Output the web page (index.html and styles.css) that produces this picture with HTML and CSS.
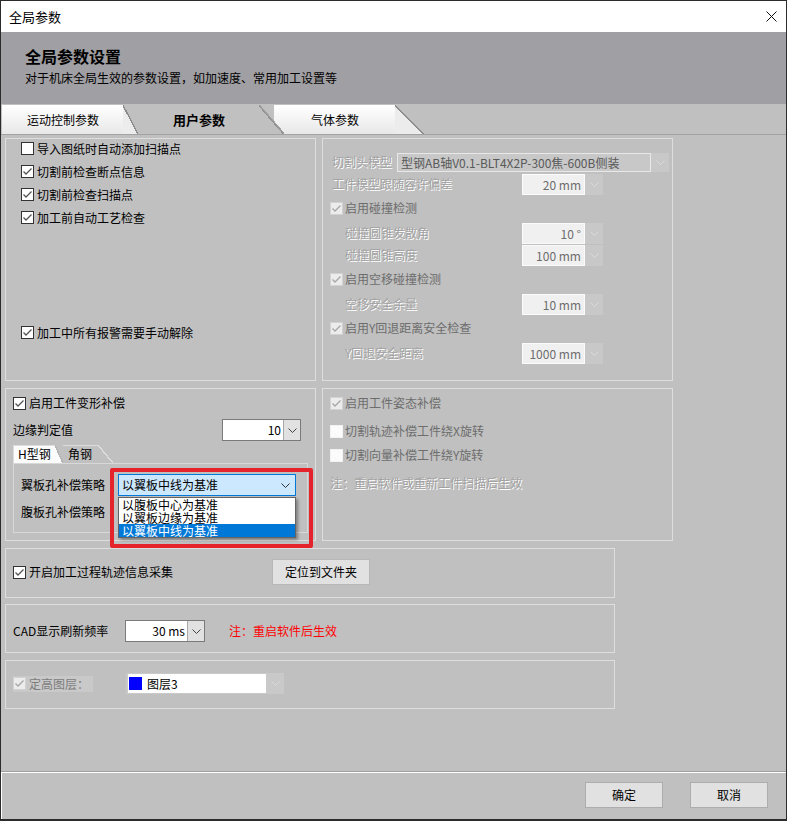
FILE: index.html
```html
<!DOCTYPE html>
<html lang="zh-CN">
<head>
<meta charset="utf-8">
<title>全局参数</title>
<link rel="stylesheet" href="styles.css">
</head>
<body>
<div class="window">
  <div class="titlebar">
    <span class="wtitle">全局参数</span>
    <svg class="close" width="11" height="11" viewBox="0 0 11 11"><path d="M0.5 0.5 L10.5 10.5 M10.5 0.5 L0.5 10.5"/></svg>
  </div>
  <div class="header">
    <div class="htitle">全局参数设置</div>
    <div class="hsub">对于机床全局生效的参数设置，如加速度、常用加工设置等</div>
  </div>
  <div class="tabstrip">
    <div class="tab t1">运动控制参数</div>
    <div class="tab t2">用户参数</div>
    <div class="tab t3">气体参数</div>
  </div>
  <div class="content">
    <div class="row row1">
      <div class="group gl1">
        <div class="chklist">
          <div class="chk"><span class="box"></span><span>导入图纸时自动添加扫描点</span></div>
          <div class="chk"><span class="box"><svg width="11" height="11" viewBox="0 0 11 11"><polyline points="1.5,5.5 4,8 9.5,2.5"/></svg></span><span>切割前检查断点信息</span></div>
          <div class="chk"><span class="box"><svg width="11" height="11" viewBox="0 0 11 11"><polyline points="1.5,5.5 4,8 9.5,2.5"/></svg></span><span>切割前检查扫描点</span></div>
          <div class="chk"><span class="box"><svg width="11" height="11" viewBox="0 0 11 11"><polyline points="1.5,5.5 4,8 9.5,2.5"/></svg></span><span>加工前自动工艺检查</span></div>
        </div>
        <div class="chk last"><span class="box"><svg width="11" height="11" viewBox="0 0 11 11"><polyline points="1.5,5.5 4,8 9.5,2.5"/></svg></span><span>加工中所有报警需要手动解除</span></div>
      </div>
      <div class="group gr1">
        <div class="rrow">
          <span class="emb">切割头模型</span>
          <div class="dcombo"><span class="dval">型钢AB轴V0.1-BLT4X2P-300焦-600B侧装</span><span class="darr"><svg width="9" height="5" viewBox="0 0 9 5"><polyline points="0.5,0.5 4.5,4.5 8.5,0.5"/></svg></span></div>
        </div>
        <div class="rrow">
          <span class="emb">工件模型跟随容许偏差</span>
          <div class="dspin"><span class="dval">20 mm</span><span class="darr"><svg width="9" height="5" viewBox="0 0 9 5"><polyline points="0.5,0.5 4.5,4.5 8.5,0.5"/></svg></span></div>
        </div>
        <div class="rrow ck">
          <div class="dchk"><span class="box dis"><svg width="11" height="11" viewBox="0 0 11 11"><polyline points="1.5,5.5 4,8 9.5,2.5"/></svg></span><span>启用碰撞检测</span></div>
        </div>
        <div class="rrow after">
          <span class="emb ind">碰撞圆锥发散角</span>
          <div class="dspin"><span class="dval">10 °</span><span class="darr"><svg width="9" height="5" viewBox="0 0 9 5"><polyline points="0.5,0.5 4.5,4.5 8.5,0.5"/></svg></span></div>
        </div>
        <div class="rrow">
          <span class="emb ind">碰撞圆锥高度</span>
          <div class="dspin"><span class="dval">100 mm</span><span class="darr"><svg width="9" height="5" viewBox="0 0 9 5"><polyline points="0.5,0.5 4.5,4.5 8.5,0.5"/></svg></span></div>
        </div>
        <div class="rrow ck">
          <div class="dchk"><span class="box dis"><svg width="11" height="11" viewBox="0 0 11 11"><polyline points="1.5,5.5 4,8 9.5,2.5"/></svg></span><span>启用空移碰撞检测</span></div>
        </div>
        <div class="rrow after">
          <span class="emb ind">空移安全余量</span>
          <div class="dspin"><span class="dval">10 mm</span><span class="darr"><svg width="9" height="5" viewBox="0 0 9 5"><polyline points="0.5,0.5 4.5,4.5 8.5,0.5"/></svg></span></div>
        </div>
        <div class="rrow ck">
          <div class="dchk"><span class="box dis"><svg width="11" height="11" viewBox="0 0 11 11"><polyline points="1.5,5.5 4,8 9.5,2.5"/></svg></span><span>启用Y回退距离安全检查</span></div>
        </div>
        <div class="rrow after">
          <span class="emb ind">Y回退安全距离</span>
          <div class="dspin"><span class="dval">1000 mm</span><span class="darr"><svg width="9" height="5" viewBox="0 0 9 5"><polyline points="0.5,0.5 4.5,4.5 8.5,0.5"/></svg></span></div>
        </div>
      </div>
    </div>

    <div class="row row2">
      <div class="group gl2">
        <div class="chk c22"><span class="box"><svg width="11" height="11" viewBox="0 0 11 11"><polyline points="1.5,5.5 4,8 9.5,2.5"/></svg></span><span>启用工件变形补偿</span></div>
        <div class="edge">
          <span>边缘判定值</span>
          <div class="spin sp-edge"><span class="val">10</span><span class="arr"><svg width="9" height="5" viewBox="0 0 9 5"><polyline points="0.5,0.5 4.5,4.5 8.5,0.5"/></svg></span></div>
        </div>
        <div class="itabs">
          <div class="itab ih">H型钢</div>
          <div class="itab ij">角钢</div>
        </div>
        <div class="ipane">
          <div class="prow">
            <span class="plab">翼板孔补偿策略</span>
            <div class="selbox"><span>以翼板中线为基准</span><svg width="9" height="5" viewBox="0 0 9 5"><polyline points="0.5,0.5 4.5,4.5 8.5,0.5"/></svg></div>
          </div>
          <div class="prow p2">
            <span class="plab">腹板孔补偿策略</span>
          </div>
        </div>
        <div class="dlist">
          <div>以腹板中心为基准</div>
          <div>以翼板边缘为基准</div>
          <div class="sel">以翼板中线为基准</div>
        </div>
        <div class="hl"></div>
      </div>
      <div class="group gr2">
        <div class="rrow r1">
          <div class="dchk"><span class="box dis"><svg width="11" height="11" viewBox="0 0 11 11"><polyline points="1.5,5.5 4,8 9.5,2.5"/></svg></span><span>启用工件姿态补偿</span></div>
        </div>
        <div class="rrow r2">
          <div class="dchk"><span class="box blank"></span><span>切割轨迹补偿工件绕X旋转</span></div>
        </div>
        <div class="rrow r3">
          <div class="dchk"><span class="box blank"></span><span>切割向量补偿工件绕Y旋转</span></div>
        </div>
        <div class="rrow r4">
          <span class="emb note">注：重启软件或重新工件扫描后生效</span>
        </div>
      </div>
    </div>

    <div class="group wide w1">
      <div class="wrow h26">
        <div class="chk cw"><span class="box"><svg width="11" height="11" viewBox="0 0 11 11"><polyline points="1.5,5.5 4,8 9.5,2.5"/></svg></span><span>开启加工过程轨迹信息采集</span></div>
        <div class="btn bfolder">定位到文件夹</div>
      </div>
    </div>

    <div class="group wide w2">
      <div class="wrow h22">
        <span class="cadlab">CAD显示刷新频率</span>
        <div class="spin sp-cad"><span class="val">30 ms</span><span class="arr"><svg width="9" height="5" viewBox="0 0 9 5"><polyline points="0.5,0.5 4.5,4.5 8.5,0.5"/></svg></span></div>
        <span class="rednote">注：重启软件后生效</span>
      </div>
    </div>

    <div class="group wide w3">
      <div class="wrow h21">
        <div class="layerchk"><span class="box dis"><svg width="11" height="11" viewBox="0 0 11 11"><polyline points="1.5,5.5 4,8 9.5,2.5"/></svg></span><span>定高图层：</span></div>
        <div class="lcombo">
          <div class="lval"><span class="sq"></span><span>图层3</span></div>
          <span class="larr"><svg width="9" height="5" viewBox="0 0 9 5"><polyline points="0.5,0.5 4.5,4.5 8.5,0.5"/></svg></span>
        </div>
      </div>
    </div>
  </div>
  <div class="footer">
    <div class="btn">确定</div>
    <div class="btn">取消</div>
  </div>
</div>
</body>
</html>
```

FILE: styles.css
```css
* { box-sizing: border-box; }
html, body { margin: 0; padding: 0; }
body {
  width: 787px;
  height: 821px;
  overflow: hidden;
  background: #3a3a3a;
  font-family: "Noto Sans CJK SC", "Noto Sans", sans-serif;
  font-size: 12px;
  line-height: 16px;
  color: #000;
}
.window {
  width: 787px;
  height: 821px;
  border: 1px solid #2b2b2b;
  border-bottom-width: 2px;
  display: flex;
  flex-direction: column;
  background: #c0c0c0;
}

/* title bar */
.titlebar {
  height: 31px;
  flex: none;
  background: #fff;
  display: flex;
  align-items: center;
  justify-content: space-between;
  padding: 0 9px 0 8px;
}
.wtitle { font-size: 13px; line-height: 16px; }
.close path { stroke: #111; stroke-width: 1; fill: none; }

/* header */
.header {
  height: 72px;
  flex: none;
  background: #a09fa3;
  padding: 14px 0 0 24px;
}
.htitle { font-size: 16px; font-weight: bold; line-height: 20px; }
.hsub { margin-top: 4px; font-size: 12px; line-height: 16px; }

/* main tabs */
.tabstrip {
  height: 31px;
  flex: none;
  border-bottom: 1px solid #a3a3a3;
  display: flex;
  align-items: flex-end;
  padding-left: 1px;
}
.tab {
  height: 29px;
  display: flex;
  align-items: center;
  font-size: 12px;
  line-height: 16px;
  white-space: nowrap;
}
.t1 {
  width: 136px;
  padding-left: 25px;
  z-index: 1;
  background:
    linear-gradient(to top right, #ececec calc(50% - 0.8px), #8c8c8c calc(50% - 0.8px), #8c8c8c calc(50% + 0.6px), transparent calc(50% + 0.6px)) right top / 15px 100% no-repeat,
    linear-gradient(#ffffff, #e8e8e8) left top / calc(100% - 15px) 100% no-repeat;
}
.t2 {
  width: 146px;
  padding-left: 35px;
  font-size: 13px;
  font-weight: bold;
  z-index: 3;
  background:
    linear-gradient(to top right, #c0c0c0 calc(50% - 1px), #8a8a8a calc(50% - 1px), #a8a8a8 calc(50% + 1px), transparent calc(50% + 1px)) right top / 25px 100% no-repeat,
    linear-gradient(#c0c0c0, #c0c0c0) left top / calc(100% - 25px) 100% no-repeat;
}
.t3 {
  width: 150px;
  margin-left: -10px;
  padding-left: 37px;
  z-index: 2;
  background:
    linear-gradient(to top right, #ececec calc(50% - 0.8px), #8c8c8c calc(50% - 0.8px), #8c8c8c calc(50% + 0.6px), transparent calc(50% + 0.6px)) right top / 29px 100% no-repeat,
    linear-gradient(#ffffff, #e8e8e8) left top / calc(100% - 29px) 100% no-repeat;
}

/* content */
.content {
  height: 636px;
  flex: none;
  padding: 3px 0 0 4px;
}
.row { display: flex; gap: 6px; }
.row1 { height: 243px; }
.row2 { height: 153px; margin-top: 7px; }
.group { border: 1px solid #dedede; position: relative; }
.gl1, .gl2 { width: 311px; }
.gr1, .gr2 { width: 351px; }
.wide { width: 610px; }
.w1 { height: 50px; margin-top: 7px; padding: 10px 0 0 7px; }
.w2 { height: 49px; margin-top: 6px; padding: 15px 0 0 7px; }
.w3 { height: 49px; margin-top: 7px; padding: 12px 0 0 7px; }

/* checkboxes */
.chk { display: flex; align-items: center; height: 23px; gap: 3px; white-space: nowrap; }
.box {
  width: 13px;
  height: 13px;
  flex: none;
  border: 1px solid #333;
  background: #fff;
  display: flex;
  align-items: center;
  justify-content: center;
}
.box svg polyline { fill: none; stroke: #555; stroke-width: 1.3; }
.box.dis { background: #ececec; border-color: #d2d2d2; }
.box.dis svg polyline { stroke: #a6a6a6; }
.box.blank { background: #fbfbfb; border-color: #f2f2f2; }

.gl1 { padding-left: 15px; }
.chklist { margin-top: -2px; }
.chk.last { margin-top: 92px; }

/* right group */
.gr1 { padding: 12px 0 0 9px; }
.rrow { display: flex; align-items: center; height: 22px; white-space: nowrap; }
.rrow.ck { margin-top: 2px; }
.rrow.after { margin-top: 3px; }
.emb { color: #a2a2a2; text-shadow: 1px 1px 0 #fff; }
.emb.ind { margin-left: 13px; }
.dchk { display: flex; align-items: center; gap: 2px; margin-left: -2px; color: #6d6d6d; }

.dcombo {
  width: 272px;
  height: 19px;
  margin-left: auto;
  margin-right: 3px;
  background: #c8c8c8;
  display: flex;
}
.dcombo .dval {
  flex: 1;
  border: 1px solid #e8e8e8;
  padding-left: 3px;
  color: #595959;
  line-height: 17px;
  overflow: hidden;
  white-space: nowrap;
}
.darr {
  width: 18px;
  flex: none;
  display: flex;
  align-items: center;
  justify-content: center;
}
.darr svg polyline { fill: none; stroke: #dadada; stroke-width: 1; }

.dspin {
  width: 81px;
  height: 21px;
  margin-left: auto;
  margin-right: 69px;
  display: flex;
  background: #c8c8c8;
}
.dspin .dval {
  flex: 1;
  background: #f0f0f0;
  border: 1px solid #fbfbfb;
  text-align: right;
  padding-right: 3px;
  color: #6d6d6d;
  line-height: 19px;
}

.gr2 { padding: 3px 0 0 9px; }
.gr2 .r2 { margin-top: 6px; }
.gr2 .r3 { margin-top: 2px; }
.gr2 .r4 { margin-top: 6px; }
.note { margin-left: -2px; }

/* left group 2 */
.gl2 { padding: 3px 0 0 7px; }
.c22 { height: 22px; }
.edge { display: flex; align-items: center; height: 22px; margin-top: 5px; }
.spin {
  display: flex;
  height: 22px;
  border: 1px solid #7a7a7a;
  background: #fff;
}
.spin .val { flex: 1; text-align: right; padding-right: 2px; line-height: 20px; }
.spin .arr {
  width: 17px;
  flex: none;
  background: #e1e1e1;
  border-left: 1px solid #a8a8a8;
  display: flex;
  align-items: center;
  justify-content: center;
}
.spin .arr svg polyline { fill: none; stroke: #444; stroke-width: 1; }
.sp-edge { width: 79px; margin-left: auto; margin-right: 14px; }

.itabs { display: flex; height: 18px; margin-top: 4px; }
.itab { height: 18px; display: flex; align-items: center; line-height: 16px; white-space: nowrap; }
.ih {
  width: 50px;
  padding-left: 4px;
  z-index: 2;
  border-left: 1px solid #dcdcdc;
  background:
    linear-gradient(to top right, #fbfbfb calc(50% - 0.8px), #b4b4b4 calc(50% - 0.8px), #b4b4b4 calc(50% + 0.6px), transparent calc(50% + 0.6px)) right top / 8px 100% no-repeat,
    linear-gradient(#dcdcdc, #dcdcdc) left top / calc(100% - 8px) 1px no-repeat,
    linear-gradient(#fbfbfb, #fbfbfb) left top / calc(100% - 8px) 100% no-repeat;
}
.ij {
  width: 50px;
  padding-left: 5px;
  background:
    linear-gradient(to top right, transparent calc(50% - 0.8px), #dcdcdc calc(50% - 0.8px), #dcdcdc calc(50% + 0.6px), transparent calc(50% + 0.6px)) right top / 15px 100% no-repeat,
    linear-gradient(#dcdcdc, #dcdcdc) left top / calc(100% - 15px) 1px no-repeat;
}
.ipane {
  width: 295px;
  height: 70px;
  border: 1px solid #d8d8d8;
  padding: 10px 0 0 7px;
}
.prow { display: flex; align-items: center; height: 22px; white-space: nowrap; }
.prow.p2 { margin-top: 5px; }
.plab { width: 97px; flex: none; }
.selbox {
  width: 178px;
  height: 22px;
  background: #cce8ff;
  border: 1px solid #0078d7;
  display: flex;
  align-items: center;
  justify-content: space-between;
  padding: 0 5px 0 3px;
}
.selbox svg polyline { fill: none; stroke: #333; stroke-width: 1; }

.dlist {
  position: absolute;
  left: 112px;
  top: 108px;
  width: 178px;
  height: 41px;
  background: #fff;
  border: 1px solid #646464;
  box-shadow: 2px 2px 3px rgba(0, 0, 0, 0.35);
  z-index: 5;
}
.dlist div { height: 13px; line-height: 13px; padding-left: 3px; white-space: nowrap; }
.dlist .sel { background: #0078d7; color: #fff; }
.hl {
  position: absolute;
  left: 104px;
  top: 79px;
  width: 203px;
  height: 80px;
  border: 4px solid #e4232b;
  border-radius: 2px;
  z-index: 6;
}

/* wide groups */
.wrow { display: flex; align-items: center; white-space: nowrap; }
.h26 { height: 26px; }
.h22 { height: 22px; }
.h21 { height: 21px; }
.cw { width: 259px; flex: none; }
.btn {
  height: 26px;
  background: #e1e1e1;
  border: 1px solid #adadad;
  display: flex;
  align-items: center;
  justify-content: center;
  white-space: nowrap;
}
.bfolder { width: 98px; border-color: #b8b8b8; }
.cadlab { width: 112px; flex: none; }
.sp-cad { width: 80px; }
.rednote { margin-left: 24px; color: #ff0000; }
.layerchk {
  width: 80px;
  height: 16px;
  background: #c9c9c9;
  display: flex;
  align-items: center;
  gap: 3px;
  color: #7d7d7d;
}
.lcombo {
  width: 158px;
  height: 21px;
  margin-left: 33px;
  background: #c9c9c9;
  display: flex;
  padding: 1px 0 1px 2px;
}
.lval {
  width: 138px;
  background: #fff;
  display: flex;
  align-items: center;
  gap: 5px;
  padding-left: 1px;
}
.sq { width: 13px; height: 13px; background: #0000ff; flex: none; }
.larr { flex: 1; display: flex; align-items: center; justify-content: center; }
.larr svg polyline { fill: none; stroke: #d8d8d8; stroke-width: 1; }

/* footer */
.footer {
  height: 48px;
  flex: none;
  border-top: 1px solid #a0a0a0;
  box-shadow: inset 0 1px #fff, inset 1px 0 #fff;
  display: flex;
  justify-content: flex-end;
  gap: 27px;
  padding: 10px 18px 0 0;
}
.footer .btn { width: 78px; }
```
